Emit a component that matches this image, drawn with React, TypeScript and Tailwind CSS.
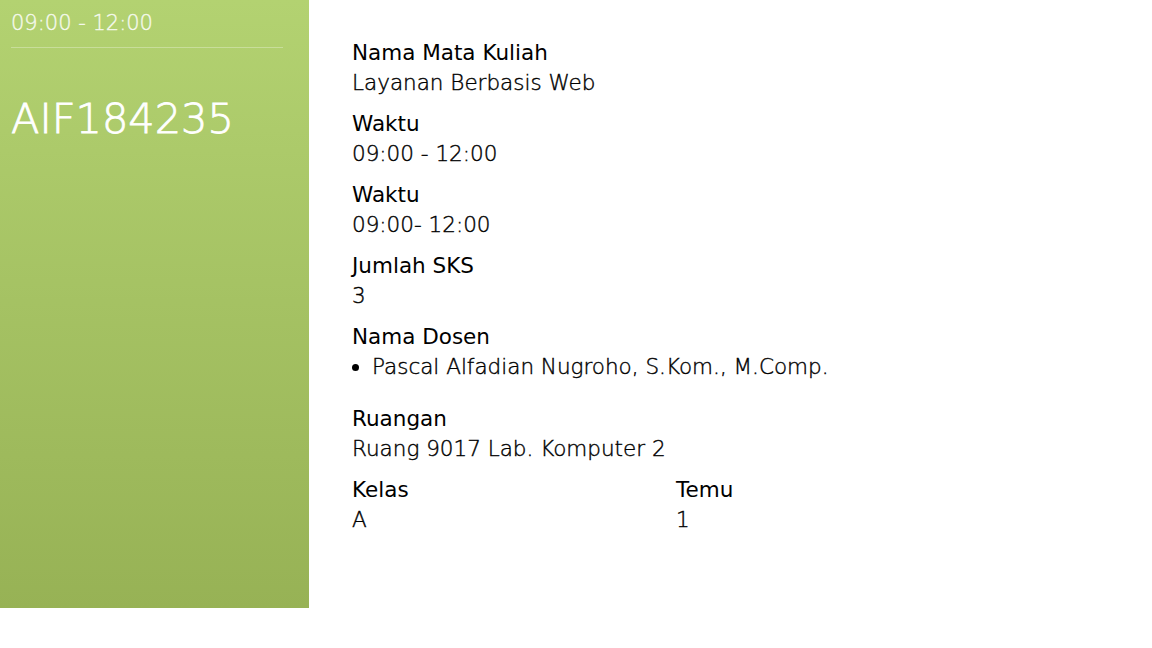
const details = [
  { label: 'Nama Mata Kuliah', value: 'Layanan Berbasis Web' },
  { label: 'Waktu', value: '09:00 - 12:00' },
  { label: 'Waktu', value: '09:00- 12:00' },
  { label: 'Jumlah SKS', value: '3' },
];

const valueClass = 'font-light [-webkit-text-stroke:0.4px_black]';

export default function App() {
  return (
    <div className="flex w-[1152px] h-[648px] bg-white font-['DejaVu_Sans',sans-serif] text-black">
      <aside className="w-[309px] h-[608px] shrink-0 bg-linear-to-b from-[#b3d271] to-[#97b255] px-[11px] pt-[7px] text-white">
        <p className="text-[21px] leading-[32px] font-light text-white/80 [-webkit-text-stroke:0.4px_rgba(255,255,255,0.8)]">09:00 - 12:00</p>
        <div className="w-[272px] border-b border-white/30 mt-[8px]" />
        <h1 className="mt-[43px] text-[41.5px] leading-[56px] font-light [-webkit-text-stroke:0.8px_white]">AIF184235</h1>
      </aside>

      <main className="pl-[43px] pt-[38px] text-[21.5px] leading-[30px]">
        {details.map((d, i) => (
          <div key={i} className="mb-[11px]">
            <p>{d.label}</p>
            <p className={valueClass}>{d.value}</p>
          </div>
        ))}

        <div className="mb-[22px]">
          <p>Nama Dosen</p>
          <ul className={`list-disc pl-[20px] ${valueClass}`}>
            <li>Pascal Alfadian Nugroho, S.Kom., M.Comp.</li>
          </ul>
        </div>

        <div className="mb-[11px]">
          <p>Ruangan</p>
          <p className={valueClass}>Ruang 9017 Lab. Komputer 2</p>
        </div>

        <div className="grid grid-cols-2 w-[648px]">
          <div>
            <p>Kelas</p>
            <p className={valueClass}>A</p>
          </div>
          <div>
            <p>Temu</p>
            <p className={valueClass}>1</p>
          </div>
        </div>
      </main>
    </div>
  );
}
